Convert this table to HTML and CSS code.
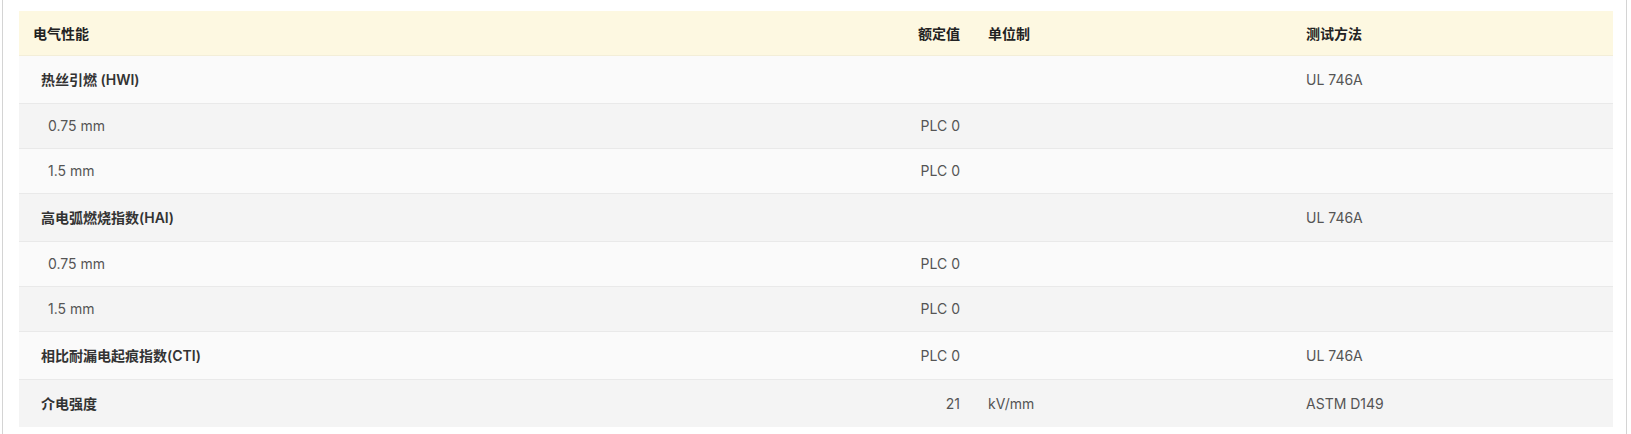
FILE: index.html
```html
<!DOCTYPE html>
<html lang="zh-CN">
<head>
<meta charset="utf-8">
<title>电气性能</title>
<link rel="stylesheet" href="styles.css">
</head>
<body>
<div class="panel">
  <table class="spec">
    <colgroup>
      <col class="c-name">
      <col class="c-val">
      <col class="c-unit">
      <col class="c-test">
    </colgroup>
    <thead>
      <tr>
        <th class="name">电气性能</th>
        <th class="val">额定值</th>
        <th>单位制</th>
        <th>测试方法</th>
      </tr>
    </thead>
    <tbody>
      <tr class="group">
        <td class="name">热丝引燃 (HWI)</td>
        <td class="val"></td>
        <td></td>
        <td>UL 746A</td>
      </tr>
      <tr class="sub">
        <td class="name">0.75 mm</td>
        <td class="val">PLC 0</td>
        <td></td>
        <td></td>
      </tr>
      <tr class="sub">
        <td class="name">1.5 mm</td>
        <td class="val">PLC 0</td>
        <td></td>
        <td></td>
      </tr>
      <tr class="group">
        <td class="name">高电弧燃烧指数(HAI)</td>
        <td class="val"></td>
        <td></td>
        <td>UL 746A</td>
      </tr>
      <tr class="sub">
        <td class="name">0.75 mm</td>
        <td class="val">PLC 0</td>
        <td></td>
        <td></td>
      </tr>
      <tr class="sub">
        <td class="name">1.5 mm</td>
        <td class="val">PLC 0</td>
        <td></td>
        <td></td>
      </tr>
      <tr class="group">
        <td class="name">相比耐漏电起痕指数(CTI)</td>
        <td class="val">PLC 0</td>
        <td></td>
        <td>UL 746A</td>
      </tr>
      <tr class="group">
        <td class="name">介电强度</td>
        <td class="val">21</td>
        <td>kV/mm</td>
        <td>ASTM D149</td>
      </tr>
    </tbody>
  </table>
</div>
</body>
</html>
```

FILE: styles.css
```css
html, body {
  margin: 0;
  padding: 0;
  background: #ffffff;
}

body {
  font-family: "Inter", "Noto Sans CJK SC", sans-serif;
  font-size: 14px;
  color: #555555;
}

.panel {
  margin-left: 2px;
  width: 1625px;
  height: 434px;
  box-sizing: border-box;
  border-left: 1px solid #d4d4d4;
  border-right: 1px solid #d4d4d4;
  padding: 11px 14px 0 16px;
}

.spec {
  width: 1594px;
  border-collapse: collapse;
  table-layout: fixed;
}

.c-name { width: 805px; }
.c-val { width: 150px; }
.c-unit { width: 318px; }
.c-test { width: 321px; }

.spec th,
.spec td {
  padding: 0 14px;
  text-align: left;
  vertical-align: middle;
  white-space: nowrap;
}

.spec th.val,
.spec td.val {
  text-align: right;
}

.spec thead tr {
  background: #fdf8e1;
  height: 44px;
  border-bottom: 1px solid #f3eed8;
}

.spec th {
  font-weight: 700;
  color: #222222;
  font-size: 14px;
}

.spec tbody tr {
  border-bottom: 1px solid #e9e9e9;
}

.spec tbody tr:nth-child(odd) {
  background: #fafafa;
}

.spec tbody tr:nth-child(even) {
  background: #f4f4f4;
}

.spec tbody tr:last-child {
  border-bottom: none;
}

.spec tr.group {
  height: 48px;
}

.spec tr.sub {
  height: 45px;
}

.spec tr.group td.name {
  padding-left: 22px;
  font-weight: 600;
  color: #333333;
}

.spec tr.sub td.name {
  padding-left: 29px;
}
```
